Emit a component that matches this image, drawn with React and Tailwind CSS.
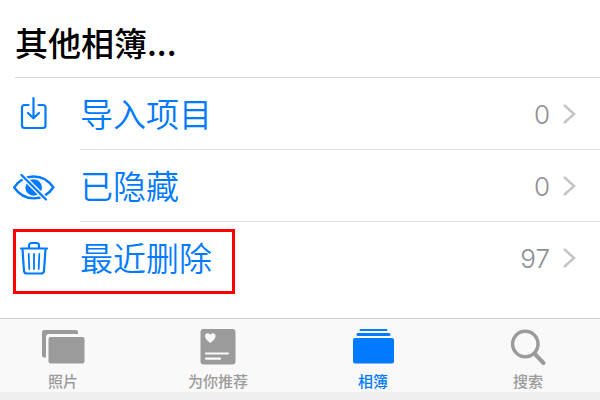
import React from 'react';

const ImportIcon = () => (
  <svg
    viewBox="0 0 44 43"
    className="w-11 h-[43px]"
    fill="none"
    stroke="currentColor"
    strokeWidth="2.2"
    strokeLinecap="round"
    strokeLinejoin="round"
    aria-hidden="true"
  >
    <path d="M16.5 12H12.5A2.5 2.5 0 0 0 10 14.5V32.5A2.5 2.5 0 0 0 12.5 35H31A2.5 2.5 0 0 0 33.5 32.5V14.5A2.5 2.5 0 0 0 31 12H26.5" />
    <path d="M21.5 5V25M16 20l5.5 5.3L27 20" />
  </svg>
);

const HiddenIcon = () => (
  <svg viewBox="0 0 44 43" className="w-11 h-[43px]" fill="none" stroke="currentColor" aria-hidden="true">
    <path
      strokeWidth="2.3"
      d="M2.2 22.5C7 15.3 14 11.5 21.7 11.5S36.5 15.3 41.3 22.5C36.5 29.5 29.4 33.3 21.7 33.3S7 29.5 2.2 22.5Z"
    />
    <circle cx="21.7" cy="22.5" r="8.3" fill="currentColor" stroke="none" />
    <path stroke="white" strokeWidth="5" d="M9 9.5L35 35.5" />
    <path strokeWidth="2.3" strokeLinecap="round" d="M9.5 10L34 34.5" />
  </svg>
);

const TrashIcon = () => (
  <svg
    viewBox="0 0 44 43"
    className="w-11 h-[43px]"
    fill="none"
    stroke="currentColor"
    strokeWidth="2.2"
    strokeLinecap="round"
    strokeLinejoin="round"
    aria-hidden="true"
  >
    <path d="M9 11.5H35" />
    <path d="M17 11V8.5A2.5 2.5 0 0 1 19.5 6h5A2.5 2.5 0 0 1 27 8.5V11" />
    <path d="M10.5 12L12 34A3 3 0 0 0 15 36.5H29A3 3 0 0 0 32 34L33.5 12" />
    <path strokeWidth="1.8" d="M16.7 17l.6 15M22 17v15M27.3 17l-.6 15" />
  </svg>
);

const Chevron = () => (
  <svg viewBox="0 0 14 22" className="w-3.5 h-[22px] text-[#c5c5ca]" fill="none" stroke="currentColor" strokeWidth="2.5" aria-hidden="true">
    <path d="M2 2l10 9-10 9" />
  </svg>
);

const PhotosIcon = () => (
  <svg viewBox="0 0 44 38" className="w-11 h-[38px]" fill="currentColor" aria-hidden="true">
    <path d="M2.5 1H35a2 2 0 0 1 2 2V5H8A3 3 0 0 0 5 8V28.5H3a2 2 0 0 1-2-2V3a2 2 0 0 1 2-2Z" />
    <rect x="7.5" y="8" width="36" height="26.5" rx="2" />
  </svg>
);

const ForYouIcon = () => (
  <svg viewBox="0 0 44 38" className="w-11 h-[38px]" fill="currentColor" aria-hidden="true">
    <rect x="4.5" y="0" width="35" height="35.5" rx="3" />
    <path
      fill="#f9f9f9"
      d="M14.3 14C10.5 11 9 9.2 9 7a2.8 2.8 0 0 1 5.3-1.3A2.8 2.8 0 0 1 19.6 7c0 2.2-1.5 4-5.3 7Z"
    />
    <path stroke="#f9f9f9" strokeWidth="2.2" strokeLinecap="round" d="M10 24.5H32M10 29.7H24" />
  </svg>
);

const AlbumsIcon = () => (
  <svg viewBox="0 0 44 38" className="w-11 h-[38px]" fill="currentColor" aria-hidden="true">
    <rect x="8.5" y="0" width="28" height="2" rx="1" />
    <rect x="5.5" y="4" width="34" height="3" rx="1.5" />
    <rect x="2" y="9" width="41" height="25.5" rx="2" />
  </svg>
);

const SearchIcon = () => (
  <svg viewBox="0 0 44 38" className="w-11 h-[38px]" fill="none" stroke="currentColor" aria-hidden="true">
    <circle cx="19.3" cy="15" r="12.7" strokeWidth="3.4" />
    <path strokeWidth="4" strokeLinecap="round" d="M28.5 24.5l9 9.5" />
  </svg>
);

const albums = [
  { name: '导入项目', count: 0, icon: ImportIcon },
  { name: '已隐藏', count: 0, icon: HiddenIcon },
  { name: '最近删除', count: 97, icon: TrashIcon, highlighted: true },
];

const tabs = [
  { name: '照片', icon: PhotosIcon },
  { name: '为你推荐', icon: ForYouIcon },
  { name: '相簿', icon: AlbumsIcon, active: true },
  { name: '搜索', icon: SearchIcon },
];

const AlbumRow = ({ album, last }) => {
  const Icon = album.icon;

  return (
    <li className="relative">
      <a href="#album" className="flex pl-3 text-[#007aff]">
        <span className="w-[68px] flex items-center">
          <Icon />
        </span>
        <span className={`flex-1 h-18 flex items-center pr-6 border-b ${last ? 'border-transparent' : 'border-[#e0e0e2]'}`}>
          <span className="flex-1 pb-0.5 text-[33px] leading-10 font-[350]">{album.name}</span>
          <span className="mr-3 pt-0.5 font-[Inter,sans-serif] text-[26px] font-light text-[#8e8e93]">{album.count}</span>
          <Chevron />
        </span>
      </a>
      {album.highlighted && (
        <span className="absolute left-[13px] top-[7px] w-[222px] h-[65px] border-3 border-[#fe0000] pointer-events-none" />
      )}
    </li>
  );
};

const TabBar = () => (
  <nav className="bg-[#f9f9f9] border-t border-[#d2d2d4]">
    <div className="flex justify-between pt-2.5 pl-8 pr-[41px] pb-px">
      {tabs.map((tab) => {
        const Icon = tab.icon;
        return (
          <button
            key={tab.name}
            type="button"
            aria-current={tab.active ? 'page' : undefined}
            className={`w-[62px] flex flex-col items-center gap-1 ${tab.active ? 'text-[#007aff]' : 'text-[#9b9b9b]'}`}
          >
            <Icon />
            <span className="text-[15px] leading-5 font-medium whitespace-nowrap">{tab.name}</span>
          </button>
        );
      })}
    </div>
    <div className="h-2 bg-[#efefef]" />
  </nav>
);

const App = () => {
  return (
    <div className="min-h-screen flex flex-col bg-white font-['Noto_Sans_CJK_SC',sans-serif]">
      <main className="flex-1">
        <h1 className="ml-[15px] pt-[18px] pb-2.5 border-b border-[#d6d6d8] text-[33px] leading-[49px] font-medium text-black">
          其他相簿...
        </h1>
        <ul>
          {albums.map((album, index) => (
            <AlbumRow key={album.name} album={album} last={index === albums.length - 1} />
          ))}
        </ul>
      </main>
      <TabBar />
    </div>
  );
};

export default App;
